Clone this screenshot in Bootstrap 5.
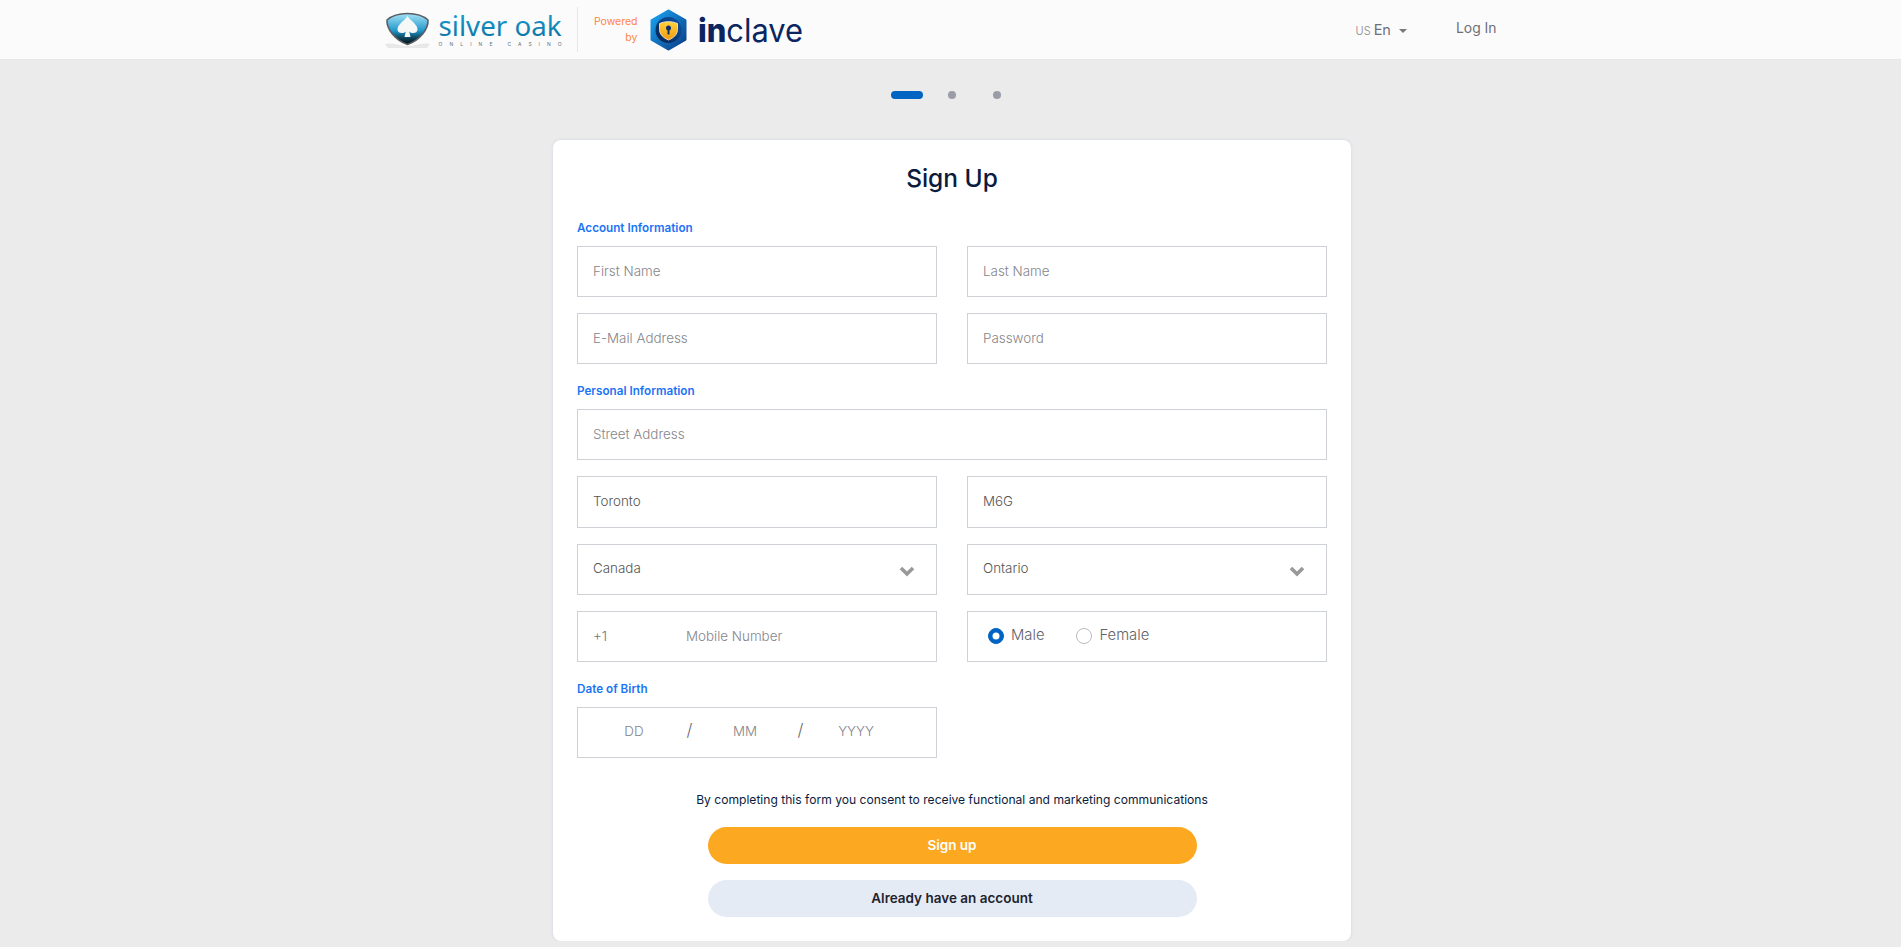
<!DOCTYPE html>
<html lang="en">
<head>
    <meta charset="UTF-8">
    <meta name="viewport" content="width=device-width, initial-scale=1.0">
    <title>Sign Up</title>
    <link href="https://cdn.jsdelivr.net/npm/bootstrap@5.3.0/dist/css/bootstrap.min.css" rel="stylesheet">
    <style>
        body { background: #ebebeb; font-family: Inter, "Noto Sans", sans-serif; color: #0b1b3d; overflow: hidden; }
        .top-bar { height: 60px; background: #fbfbfc; border-bottom: 1px solid #e6e6e6; padding: 0; }
        .top-inner { width: 1140px; margin: 0 auto; padding: 0 24px 0 3px; }
        .brand-logo { display: block; overflow: visible; }
        .logo-divider { width: 1px; height: 45px; background: #e3e8ee; margin: 0 11px 0 15px; }
        .powered { color: #ff8446; font-size: 10.5px; line-height: 16px; text-align: right; width: 49px; margin-right: 12px; }
        .nav-right { margin-bottom: 2px; }
        .lang-toggle { color: #6f7076; font-size: 14.5px; font-weight: 400; text-decoration: none; }
        .lang-toggle small { font-size: 11px; color: #8a8a8a; margin-right: 3px; font-weight: 300; }
        .lang-toggle::after { margin-left: 8px; color: #77777c; vertical-align: 2px; }
        .login-link { color: #6f7076; font-size: 13.9px; margin-left: 49px; text-decoration: none; }

        .page-wrap { padding-left: 3px; }
        .stepper { height: 80px; padding: 31px 12px 0 0; }
        .step-dot { width: 8px; height: 8px; border-radius: 4px; background: #9a9ca8; margin-right: 37px; }
        .step-dot:last-child { margin-right: 0; }
        .step-dot.is-on { width: 32px; background: #0064c2; margin-right: 25px; }

        .form-box { width: 798px; height: 801px; margin: 0 auto; background: #fff; border-radius: 8px; padding: 0 24px; box-shadow: 0 0 3px rgba(190,200,225,.7); }
        .form-title { font-size: 24.5px; font-weight: 450; line-height: 36px; margin: 0; padding: 20px 0 0; text-align: center; color: #0b1b3d; }
        .sect-label { color: #1b74f5; font-size: 11.7px; font-weight: 600; line-height: 16px; margin: 3px 0 10px; }
        .first-label { margin-top: 24px; }
        .field-row { --bs-gutter-x: 30px; --bs-gutter-y: 0; }
        .field-row > div { margin-bottom: 16px; }
        .form-control, .form-select, .field-box { height: 51px; border: 1px solid #ced1d6; border-radius: 0; font-size: 13.4px; font-weight: 300; color: #555; padding: 0 15px 1px; }
        .form-select { padding-bottom: 3px; }
        .form-control.tall-field { height: 52px; padding-bottom: 3px; }
        .form-control::placeholder { color: #85858b; }
        .form-select { background-image: url("data:image/svg+xml,%3Csvg xmlns='http://www.w3.org/2000/svg' viewBox='0 0 16 11'%3E%3Cpath d='M2 2l6 6 6-6' fill='none' stroke='%23999' stroke-width='3.6'/%3E%3C/svg%3E"); background-size: 16px 11px; background-position: right 21px top 21px; }
        .field-box { background: #fff; display: flex; align-items: center; }
        .dial-code { width: 93px; color: #75757b; flex-shrink: 0; }
        .bare-input { border: 0; outline: 0; padding: 0; font: inherit; color: #555; background: transparent; min-width: 0; }
        .bare-input::placeholder { color: #85858b; }
        .gender-box { padding: 0 0 2px 20px; font-size: 14.8px; }
        .gender-box .form-check { margin: 0 32px 0 0; padding: 0; display: flex; align-items: center; min-height: 0; }
        .gender-box .form-check-input { width: 16px; height: 16px; margin: 0 7px 0 0; float: none; border-color: #b9bcc2; }
        .gender-box .form-check-input:checked { background-color: #0064c2; border-color: #0064c2; }
        .gender-box .form-check-label { color: #62626a; }
        .dob-box { padding: 0 0 3px 6px; }
        .dob-box .bare-input { width: 100px; text-align: center; }
        .dob-slash { width: 11px; text-align: center; font-size: 17px; color: #6a6a70; }
        .consent { font-size: 12.1px; font-weight: 400; text-align: center; line-height: 18px; margin: 17px 0 18px; color: #0b1b3d; }
        .pill-btn { display: block; width: 489px; height: 37px; margin: 0 auto 16px; border: 0; border-radius: 19px; font-size: 13.5px; font-weight: 600; padding: 0; }
        .btn-signup, .btn-signup:hover { background: #fca820; color: #fff; }
        .btn-have, .btn-have:hover { background: #e5ebf5; color: #20232e; }
    </style>
</head>
<body>
    <nav class="navbar top-bar">
        <div class="top-inner d-flex align-items-center">
            <div class="d-flex align-items-center">
                <!-- silver oak -->
                <svg class="brand-logo" width="178" height="46" viewBox="0 0 178 46">
                    <defs>
                        <linearGradient id="oakText" x1="0" y1="0" x2="0" y2="1">
                            <stop offset="0" stop-color="#1aa6da"/>
                            <stop offset="1" stop-color="#0a6d9c"/>
                        </linearGradient>
                        <linearGradient id="shieldFill" x1="0" y1="0" x2="0" y2="1">
                            <stop offset="0" stop-color="#a4e3f7"/>
                            <stop offset=".55" stop-color="#2298cb"/>
                            <stop offset=".8" stop-color="#0d4058"/>
                            <stop offset="1" stop-color="#060c10"/>
                        </linearGradient>
                    </defs>
                    <path d="M1 37c6-1 12 0 18 2h9c6-2 12-3 18-2l-3 4H4z" fill="#e8e8e8"/>
                    <path d="M3 13C8 8.500 16 6.500 23.500 6.500S39 8.500 44 13c.5 9-8 20-20.500 24.500C11 33 2.500 22 3 13z" fill="url(#shieldFill)" stroke="#5b5f62" stroke-width="1.600"/>
                    <path d="M23.500 9c3 5 10 8 10 13.500 0 3.800-5.600 4.800-8.300 2l1.300 5.500h-6l1.300-5.500c-2.700 2.800-8.300 1.800-8.300-2C13.500 17 20.500 14 23.500 9z" fill="#f6f7f7"/>
                    <text x="54.500" y="28.500" font-family="'Noto Sans', sans-serif" font-size="27" textLength="123" lengthAdjust="spacingAndGlyphs" fill="url(#oakText)">silver oak</text>
                    <text x="54.500" y="38.500" font-family="Inter, sans-serif" font-size="5" textLength="54" fill="#5f6f78">ONLINE</text>
                    <text x="123.500" y="38.500" font-family="Inter, sans-serif" font-size="5" textLength="54" fill="#5f6f78">CASINO</text>
                </svg>
                <div class="logo-divider"></div>
                <div class="powered">Powered<br>by</div>
                <!-- inclave -->
                <svg class="brand-logo" width="160" height="42" viewBox="0 0 160 42">
                    <defs>
                        <linearGradient id="hexFill" x1="0" y1="0" x2="1" y2="1">
                            <stop offset="0" stop-color="#1aa4f2"/>
                            <stop offset="1" stop-color="#0a3c86"/>
                        </linearGradient>
                        <linearGradient id="ringFill" x1="0" y1="1" x2="1" y2="0">
                            <stop offset="0" stop-color="#06224f"/>
                            <stop offset="1" stop-color="#0f55a8"/>
                        </linearGradient>
                        <linearGradient id="goldFill" x1="0" y1="0" x2="0" y2="1">
                            <stop offset="0" stop-color="#ffd23f"/>
                            <stop offset="1" stop-color="#f29a0c"/>
                        </linearGradient>
                    </defs>
                    <path d="M18.500 2L35 11.500v19L18.500 40 2 30.500v-19z" fill="url(#hexFill)" stroke="url(#hexFill)" stroke-width="3" stroke-linejoin="round"/>
                    <circle cx="18.500" cy="21" r="13" fill="url(#ringFill)"/>
                    <path d="M9.500 14.500c6-2.500 12-2.500 18 0v6c0 5-4 8.500-9 10.500-5-2-9-5.500-9-10.500z" fill="url(#goldFill)" stroke="#f7f0dc" stroke-width=".8"/>
                    <circle cx="18.500" cy="19" r="2.500" fill="#0c2f66"/>
                    <rect x="17.500" y="20" width="2" height="5.500" fill="#0c2f66"/>
                    <text x="48" y="32.500" font-family="Inter, sans-serif" font-size="32" fill="#0a2560" textLength="105" lengthAdjust="spacingAndGlyphs"><tspan font-weight="800">in</tspan><tspan font-weight="400">clave</tspan></text>
                </svg>
            </div>
            <div class="dropdown ms-auto nav-right">
                <a class="lang-toggle dropdown-toggle" href="#" data-bs-toggle="dropdown"><small>US</small>En</a>
                <ul class="dropdown-menu">
                    <li><a class="dropdown-item" href="#">En</a></li>
                    <li><a class="dropdown-item" href="#">Fr</a></li>
                </ul>
            </div>
            <a class="login-link nav-right" href="#">Log In</a>
        </div>
    </nav>

    <div class="page-wrap">
        <div class="stepper d-flex align-items-start justify-content-center">
            <span class="step-dot is-on"></span>
            <span class="step-dot"></span>
            <span class="step-dot"></span>
        </div>

        <form class="form-box">
            <h1 class="form-title">Sign Up</h1>

            <p class="sect-label first-label">Account Information</p>
            <div class="row field-row">
                <div class="col-6"><input type="text" class="form-control" placeholder="First Name"></div>
                <div class="col-6"><input type="text" class="form-control" placeholder="Last Name"></div>
                <div class="col-6"><input type="email" class="form-control" placeholder="E-Mail Address"></div>
                <div class="col-6"><input type="password" class="form-control" placeholder="Password"></div>
            </div>

            <p class="sect-label">Personal Information</p>
            <div class="row field-row">
                <div class="col-12"><input type="text" class="form-control" placeholder="Street Address"></div>
                <div class="col-6"><input type="text" class="form-control tall-field" value="Toronto"></div>
                <div class="col-6"><input type="text" class="form-control tall-field" value="M6G"></div>
                <div class="col-6">
                    <select class="form-select"><option>Canada</option></select>
                </div>
                <div class="col-6">
                    <select class="form-select"><option>Ontario</option></select>
                </div>
                <div class="col-6">
                    <div class="field-box">
                        <span class="dial-code">+1</span>
                        <input type="tel" class="bare-input flex-grow-1" placeholder="Mobile Number">
                    </div>
                </div>
                <div class="col-6">
                    <div class="field-box gender-box">
                        <div class="form-check">
                            <input class="form-check-input" type="radio" name="gender" id="male" checked>
                            <label class="form-check-label" for="male">Male</label>
                        </div>
                        <div class="form-check">
                            <input class="form-check-input" type="radio" name="gender" id="female">
                            <label class="form-check-label" for="female">Female</label>
                        </div>
                    </div>
                </div>
            </div>

            <p class="sect-label">Date of Birth</p>
            <div class="row field-row">
                <div class="col-6">
                    <div class="field-box dob-box">
                        <input type="text" class="bare-input" placeholder="DD">
                        <span class="dob-slash">/</span>
                        <input type="text" class="bare-input" placeholder="MM">
                        <span class="dob-slash">/</span>
                        <input type="text" class="bare-input" placeholder="YYYY">
                    </div>
                </div>
            </div>

            <p class="consent">By completing this form you consent to receive functional and marketing communications</p>
            <button type="button" class="btn pill-btn btn-signup">Sign up</button>
            <button type="button" class="btn pill-btn btn-have">Already have an account</button>
        </form>
    </div>
</body>
</html>
